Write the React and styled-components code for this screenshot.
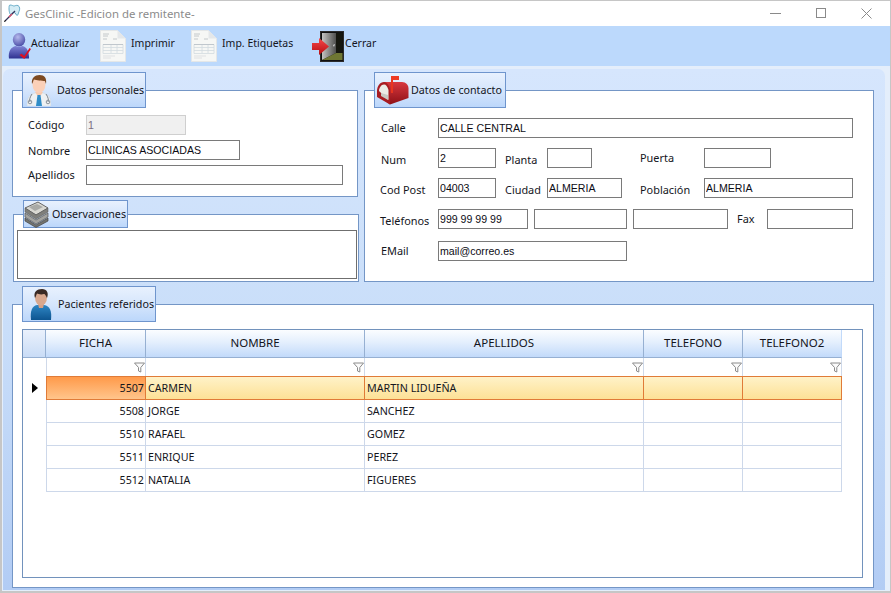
import React from "react";
import styled, { createGlobalStyle } from "styled-components";

const Global = createGlobalStyle`
  html, body { margin: 0; padding: 0; background: #c6c6c6; }
  #root { width: 891px; height: 593px; overflow: hidden; }
  * { box-sizing: border-box; }
`;

const UI = `"Noto Sans", "Open Sans", sans-serif`;
const COLS = "23px 100px 219px 279px 99px 99px";

const Win = styled.div`
  margin: 1px 1px 2px 2px; height: 590px; display: flex; flex-direction: column;
  background: #e4eefb; font-family: ${UI}; font-size: 10.7px; color: #14151c;
`;
const TitleBar = styled.header`
  height: 25px; flex: none; background: #fff; display: flex; align-items: center; padding: 0 0 1px 2px;
`;
const TitleText = styled.span`
  margin-left: 4px; font-size: 11.4px; color: #8b8b8b; flex: 1;
`;
const WinControls = styled.div`
  display: flex; align-items: center; gap: 35px; padding-right: 18px;
`;
const Toolbar = styled.nav`
  height: 40px; flex: none; background: #bcd9fc; display: flex; align-items: center; padding-left: 6px;
`;
const ToolButton = styled.button`
  border: 0; background: none; padding: 0; width: ${p => p.$w}px; display: flex; align-items: center; flex: none;
  font: inherit; color: inherit; height: 40px;
`;
const ToolLabel = styled.span`
  margin-left: ${p => p.$gap}px; padding-bottom: 6px; font-size: 10.5px; white-space: nowrap;
`;
const Content = styled.main`
  flex: 1; margin: 3px 5px 1px 1px; padding: 3px 11px 0 9px; border-radius: 7px 7px 0 0;
  background: linear-gradient(#d6e6fd, #c9def9 50%, #b2ccf4);
`;
const TopGrid = styled.div`
  display: grid; grid-template-columns: 347px 510px; column-gap: 5px;
`;
const Column = styled.div`
  display: flex; flex-direction: column;
`;
const Group = styled.section`
  display: flex; flex-direction: column; margin-top: ${p => p.$top || 0}px; margin-left: ${p => p.$left || 0}px; margin-right: ${p => p.$right || 0}px;
`;
const Legend = styled.div`
  position: relative; z-index: 1; margin-left: 10px; width: ${p => p.$w}px; height: ${p => p.$h}px; flex: none;
  padding-left: ${p => p.$pad}px; display: flex; align-items: center; white-space: nowrap;
  border: 1px solid #6f95cd; background: linear-gradient(#e8f1fe, #d6e6fc 50%, #bcd7fb);
  svg { flex: none; }
  span { margin-left: ${p => p.$gap}px; }
`;
const Box = styled.div`
  margin-top: -${p => p.$over}px; height: ${p => p.$h}px; border: 1px solid #7496c6; background: #fff;
  padding: ${p => p.$pad};
`;
const Row = styled.div`
  display: flex; align-items: center; height: 20px; margin-top: ${p => p.$top || 0}px;
`;
const Label = styled.label`
  flex: none; width: ${p => p.$w}px; margin-left: ${p => p.$ml || 0}px;
  padding-top: ${p => p.$drop || 0}px; padding-bottom: 2px;
  white-space: nowrap; font-size: 10.9px;
`;
const Field = styled.input`
  flex: none; width: ${p => p.$w}px; height: 20px; border: 1px solid #7a7a7a; padding: 0 1px; margin: 0;
  margin-top: ${p => p.$up ? -p.$up : 0}px; margin-left: ${p => p.$ml || 0}px; outline: 0; border-radius: 0;
  font: 10.6px "Liberation Sans", Arial, sans-serif; color: #0c0c14; background: #fff;
  &:disabled { background: #f0f0f0; border: 1px solid #cfcfcf; color: #7a6d80; }
`;
const Memo = styled.div`
  height: 49px; border: 1px solid #6f6f6f; background: #fff;
`;
const DataGrid = styled.div`
  height: 249px; border: 1px solid #7292bc; background: #fff; font-size: 10.7px;
`;
const GridRow = styled.div`
  display: grid; grid-template-columns: ${COLS}; height: ${p => p.$h}px;
`;
const HeadCell = styled.div`
  display: flex; align-items: center; justify-content: center; font-size: 11.5px; padding-bottom: 2px;
  border-right: 1px solid #96b0d2; border-bottom: 1px solid #96b0d2;
  background: ${p => p.$corner ? "linear-gradient(#eaf1fc, #c9dcf6)" : "linear-gradient(#fbfdff, #e4effd 45%, #c2dafa)"};
  &:last-child { border-right: 1px solid #c2dafa; }
`;
const FilterCell = styled.div`
  display: flex; align-items: center; justify-content: flex-end;
  border-right: 1px solid #cfd9e9; ${p => p.$first && "box-shadow: inset 1px 0 #cfd9e9;"}
`;
const Marker = styled.div`
  display: flex; align-items: center; justify-content: center;
`;
const Cell = styled.div`
  display: flex; align-items: center; padding: 0 1px 0 2px; white-space: nowrap; overflow: hidden;
  justify-content: ${p => p.$num ? "flex-end" : "flex-start"};
  border-right: 1px solid #cdd8ea; border-bottom: 1px solid #cdd8ea;
  ${p => p.$first && "box-shadow: inset 1px 0 #cdd8ea;"}
`;
const SelectedCell = styled(Cell)`
  border: 0; border-top: 1px solid #e07b38; border-bottom: 1px solid #e07b38; border-right: 1px solid #e07b38;
  ${p => p.$first && "border-left: 1px solid #e07b38; box-shadow: none;"}
  background: ${p => p.$first ? "linear-gradient(#ff9a4a, #ffc58c)" : "linear-gradient(#fff2c8, #fde196)"};
`;

const UserCheck = () => (
  <svg width="23" height="28" viewBox="0 0 24 28">
    <defs>
      <radialGradient id="uh" cx=".4" cy=".3" r=".8"><stop offset="0" stopColor="#b6b9ec" /><stop offset="1" stopColor="#3e419f" /></radialGradient>
      <linearGradient id="ub" x1="0" y1="0" x2="0" y2="1"><stop offset="0" stopColor="#8084d6" /><stop offset="1" stopColor="#2f3290" /></linearGradient>
    </defs>
    <ellipse cx="11.5" cy="7.5" rx="6.5" ry="7" fill="url(#uh)" />
    <path d="M1 27c-1-7 2-12 7-13 2 1 5 1 7 0 5 1 7 6 7 13z" fill="url(#ub)" />
    <path d="M14 22l3 2.5L22.500 16l1.500 1-7 10.500-5-4z" fill="#e01020" />
  </svg>
);
const DocIcon = () => (
  <svg width="26" height="32" viewBox="0 0 26 32">
    <path d="M.5.5h17l8 8v23H.5z" fill="#f6f7f5" stroke="#e4e7e8" />
    <path d="M17.500.5v8h8z" fill="#e4e7e9" />
    <path d="M3 4h6M3 6h5M3 9h4M13 9h4" stroke="#b8bcc0" strokeWidth=".8" />
    <path d="M3 14.500h20v9H3zM3 17.500h20M3 20.500h20M11 15v8M17 15v8" fill="none" stroke="#d3dae0" strokeWidth=".8" />
    <path d="M3 14.500h20" stroke="#b9c0c7" strokeWidth=".8" />
    <path d="M3 26h12M3 28h8" stroke="#dfe1e3" />
  </svg>
);
const DoorIcon = () => (
  <svg width="33" height="31" viewBox="0 0 33 31">
    <defs>
      <linearGradient id="dd" x1="0" y1="0" x2="1" y2="0"><stop offset="0" stopColor="#c4c4c2" /><stop offset="1" stopColor="#4f4f4d" /></linearGradient>
      <linearGradient id="da" x1="0" y1="0" x2="0" y2="1"><stop offset="0" stopColor="#f54a4a" /><stop offset="1" stopColor="#b80d12" /></linearGradient>
    </defs>
    <rect x="8.500" y=".5" width="23" height="30" fill="#111" stroke="#2b2b2b" />
    <path d="M10 2h14v20l-14 7z" fill="url(#dd)" />
    <path d="M24 2h6.500v20H24z" fill="#16170f" />
    <path d="M10 29l14-7h6.500v7z" fill="#6f7733" />
    <path d="M21 14l2-1-1 3z" fill="#ddd" />
    <path d="M0 12h7V7l10 8.500L7 24v-5H0z" fill="url(#da)" />
  </svg>
);
const DoctorIcon = () => (
  <svg width="24" height="31" viewBox="0 0 24 31">
    <path d="M0 31c0-9 3-12 8-13h8c5 1 8 4 8 13z" fill="#eef1f3" stroke="#cfd4d8" strokeWidth=".5" />
    <path d="M8 17h8l-4 6z" fill="#f7c9ae" />
    <path d="M10.500 20h3l1.500 11H9z" fill="#2f8dc8" />
    <ellipse cx="12" cy="9.500" rx="6.500" ry="8.500" fill="#fbd0b8" />
    <path d="M5 9C4 3 8 0 12.500 0c5 0 7.500 3 6.500 9l-1.200-3C15 6 9 5 7 4.500 6 6 6 8 5 9z" fill="#7d4a22" />
    <path d="M5 19c-2 3-3 6-2 8M19 19c2 3 3 6 2 8" fill="none" stroke="#7c8590" strokeWidth="1" />
    <circle cx="3" cy="27" r="1.800" fill="none" stroke="#8a939c" />
    <circle cx="21" cy="27" r="1.800" fill="none" stroke="#8a939c" />
  </svg>
);
const PapersIcon = () => (
  <svg width="25" height="27" viewBox="0 0 25 27">
    <path d="M1 7L14 1l10 6-12 7z" fill="#d9d8d2" stroke="#666" />
    <path d="M5 6l8-3 6 3-8 4z" fill="#a9aaa6" />
    <path d="M1 7l11 7 12-7v4L12 18 1 11z" fill="#7f7f7b" stroke="#555" strokeWidth=".5" />
    <path d="M1 12l11 7 12-7v4L12 23 1 16z" fill="#a3a39f" stroke="#555" strokeWidth=".7" />
    <path d="M1 17l11 7 12-7v3l-12 6.500L1 20z" fill="#74746e" stroke="#444" strokeWidth=".7" />
  </svg>
);
const MailboxIcon = () => (
  <svg width="33" height="29" viewBox="0 0 33 29">
    <defs><linearGradient id="mb" x1="0" y1="0" x2="0" y2="1"><stop offset="0" stopColor="#d8383f" /><stop offset="1" stopColor="#8e1016" /></linearGradient></defs>
    <path d="M8 6h18c4 0 6.500 3 6.500 6.500V22L14 28.500 4 21z" fill="url(#mb)" />
    <path d="M1 15c0-5 3-9 7-9 3 0 6 4 6 9v13.500L1 21z" fill="#a81c22" />
    <path d="M3 15c0-3 2-6.500 5-6.500 2 0 3.500 2 4.500 5.500v10z" fill="#ecebe6" />
    <path d="M5 17l7 2v5l-7-4z" fill="#c9c9c4" />
    <path d="M15 0h2v17h-2z" fill="#e8361f" />
    <path d="M15 0h8v4h-8z" fill="#ee3b22" />
  </svg>
);
const PatientIcon = () => (
  <svg width="22" height="31" viewBox="0 0 22 31">
    <defs><linearGradient id="pb" x1="0" y1="0" x2="0" y2="1"><stop offset="0" stopColor="#2f86c4" /><stop offset="1" stopColor="#0d5590" /></linearGradient></defs>
    <path d="M1 31c-1-9 1-14 6-15h7c6 1 8 6 7 15z" fill="url(#pb)" />
    <path d="M8 15h6l-1 4H9z" fill="#d69f84" />
    <ellipse cx="11" cy="8.500" rx="6" ry="8" fill="#d9a88e" />
    <path d="M5 9C3 3 7 0 12 0c5 0 7 4 5 9-1-2-2-4-3-4-3 1-6 0-7-.5C6 6 6 8 5 9z" fill="#3a2a24" />
  </svg>
);
const AppIcon = () => (
  <svg width="17" height="18" viewBox="0 0 17 18">
    <path d="M6 1c2 0 3 1 4 1s2-1 4-.5c2 1 2 4 1 6-.8 2-1 4-2 4s-1-3-3-3-2 1-3 2S5 7 5 5 5 1 6 1z" fill="#d4ecf5" stroke="#4a9abb" strokeWidth=".8" />
    <path d="M1 17L11 7" stroke="#34345a" strokeWidth="1.300" />
    <path d="M5 13l3-3" stroke="#d84868" strokeWidth="1.300" />
    <path d="M0 17.500l2-1" stroke="#111" />
  </svg>
);
const Funnel = () => (
  <svg width="11" height="11" viewBox="0 0 11 11">
    <path d="M.5 1h10L6.800 5.500V10l-2.300-1V5.500z" fill="#fbfbfb" stroke="#8b8b8b" />
  </svg>
);
const Arrow = () => (
  <svg width="6" height="10" viewBox="0 0 6 10"><path d="M0 0l6 5-6 5z" fill="#000" /></svg>
);

const rows = [
  ["5507", "CARMEN", "MARTIN LIDUEÑA"],
  ["5508", "JORGE", "SANCHEZ"],
  ["5510", "RAFAEL", "GOMEZ"],
  ["5511", "ENRIQUE", "PEREZ"],
  ["5512", "NATALIA", "FIGUERES"],
];
const heads = ["FICHA", "NOMBRE", "APELLIDOS", "TELEFONO", "TELEFONO2"];

export default function App() {
  return (
    <Win>
      <Global />
      <TitleBar>
        <AppIcon />
        <TitleText>GesClinic -Edicion de remitente-</TitleText>
        <WinControls>
          <svg width="11" height="11" viewBox="0 0 11 11"><path d="M0 5.500h11" stroke="#8a8a8a" /></svg>
          <svg width="10" height="10" viewBox="0 0 10 10"><rect x=".5" y=".5" width="9" height="9" fill="none" stroke="#8a8a8a" /></svg>
          <svg width="11" height="11" viewBox="0 0 11 11"><path d="M.5.5l10 10M10.500.5l-10 10" stroke="#8a8a8a" /></svg>
        </WinControls>
      </TitleBar>
      <Toolbar>
        <ToolButton $w={92}><UserCheck /><ToolLabel $gap={0}>Actualizar</ToolLabel></ToolButton>
        <ToolButton $w={91}><DocIcon /><ToolLabel $gap={5}>Imprimir</ToolLabel></ToolButton>
        <ToolButton $w={121}><DocIcon /><ToolLabel $gap={5}>Imp. Etiquetas</ToolLabel></ToolButton>
        <ToolButton $w={70}><DoorIcon /><ToolLabel $gap={0}>Cerrar</ToolLabel></ToolButton>
      </Toolbar>
      <Content>
        <TopGrid>
          <Column>
            <Group $right={1}>
              <Legend $w={124} $h={36} $pad={4} $gap={6}><DoctorIcon /><span>Datos personales</span></Legend>
              <Box $over={18} $h={107} $pad="24px 14px 0 15px">
                <Row><Label $w={58}>Código</Label><Field $w={100} value="1" disabled readOnly /></Row>
                <Row $top={5}><Label $w={58} $drop={2}>Nombre</Label><Field $w={154} value="CLINICAS ASOCIADAS" readOnly /></Row>
                <Row $top={5}><Label $w={58}>Apellidos</Label><Field $w={257} value="" readOnly /></Row>
              </Box>
            </Group>
            <Group $top={3} $left={1}>
              <Legend $w={105} $h={28} $pad={0} $gap={3}><PapersIcon /><span>Observaciones</span></Legend>
              <Box $over={14} $h={68} $pad="15px 1px 0 3px"><Memo /></Box>
            </Group>
          </Column>
          <Group>
            <Legend $w={132} $h={36} $pad={1} $gap={2}><MailboxIcon /><span>Datos de contacto</span></Legend>
            <Box $over={18} $h={192} $pad="27px 16px 0 16px">
              <Row><Label $w={57}>Calle</Label><Field $w={415} value="CALLE CENTRAL" readOnly /></Row>
              <Row $top={10}>
                <Label $w={57} $drop={4}>Num</Label><Field $w={58} value="2" readOnly />
                <Label $ml={9} $w={42} $drop={4}>Planta</Label><Field $w={45} value="" readOnly />
                <Label $ml={48} $w={64}>Puerta</Label><Field $w={67} value="" readOnly />
              </Row>
              <Row $top={10}>
                <Label $ml={-1} $w={58} $drop={4}>Cod Post</Label><Field $w={58} value="04003" readOnly />
                <Label $ml={9} $w={42} $drop={4}>Ciudad</Label><Field $w={75} value="ALMERIA" readOnly />
                <Label $ml={18} $w={64} $drop={4}>Población</Label><Field $w={149} $up={1} value="ALMERIA" readOnly />
              </Row>
              <Row $top={11}>
                <Label $ml={-1} $w={58} $drop={4}>Teléfonos</Label><Field $w={90} value="999 99 99 99" readOnly />
                <Field $w={93} $ml={6} value="" readOnly />
                <Field $w={95} $ml={6} value="" readOnly />
                <Label $ml={9} $w={30}>Fax</Label><Field $w={86} value="" readOnly />
              </Row>
              <Row $top={12}><Label $w={57}>EMail</Label><Field $w={189} value="mail@correo.es" readOnly /></Row>
            </Box>
          </Group>
        </TopGrid>
        <Group $top={4}>
          <Legend $w={134} $h={36} $pad={7} $gap={6}><PatientIcon /><span>Pacientes referidos</span></Legend>
          <Box $over={18} $h={284} $pad="24px 10px 0 9px">
            <DataGrid>
              <GridRow $h={28}>
                <HeadCell $corner />
                {heads.map(h => <HeadCell key={h}>{h}</HeadCell>)}
              </GridRow>
              <GridRow $h={18}>
                <Marker />
                {heads.map((h, i) => <FilterCell key={h} $first={i === 0}><Funnel /></FilterCell>)}
              </GridRow>
              {rows.map((r, i) => {
                const C = i === 0 ? SelectedCell : Cell;
                return (
                  <GridRow key={r[0]} $h={i === 0 ? 24 : 23}>
                    <Marker>{i === 0 && <Arrow />}</Marker>
                    <C $num $first>{r[0]}</C>
                    <C>{r[1]}</C>
                    <C>{r[2]}</C>
                    <C />
                    <C />
                  </GridRow>
                );
              })}
            </DataGrid>
          </Box>
        </Group>
      </Content>
    </Win>
  );
}
